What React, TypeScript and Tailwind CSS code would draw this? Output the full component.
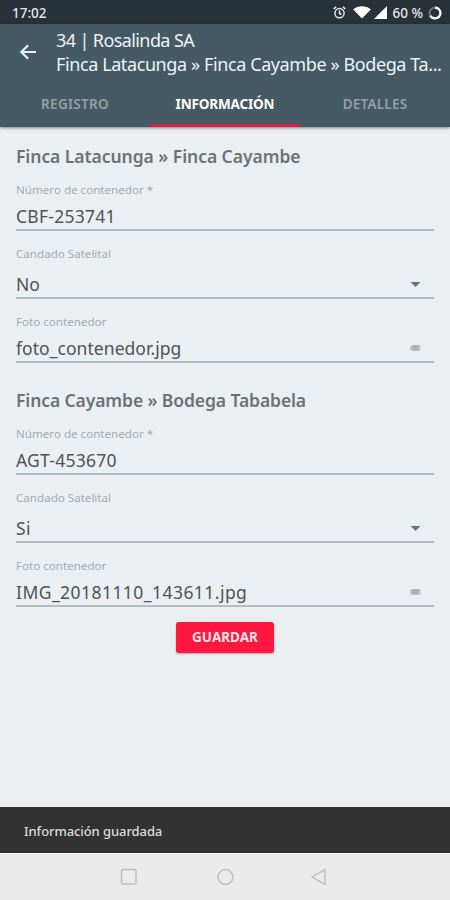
import clsx from "clsx";

type FieldKind = "text" | "select" | "file";

interface FieldData {
  label: string;
  value: string;
  kind: FieldKind;
  valueClass: string;
}

interface SectionData {
  title: string;
  titleClass: string;
  fields: FieldData[];
}

const sections: SectionData[] = [
  {
    title: "Finca Latacunga » Finca Cayambe",
    titleClass: "tracking-[-0.05px]",
    fields: [
      { label: "Número de contenedor *", value: "CBF-253741", kind: "text", valueClass: "tracking-[0.25px]" },
      { label: "Candado Satelital", value: "No", kind: "select", valueClass: "tracking-[0px]" },
      { label: "Foto contenedor", value: "foto_contenedor.jpg", kind: "file", valueClass: "tracking-[0.05px]" },
    ],
  },
  {
    title: "Finca Cayambe » Bodega Tababela",
    titleClass: "tracking-[-0.1px]",
    fields: [
      { label: "Número de contenedor *", value: "AGT-453670", kind: "text", valueClass: "tracking-[0.25px]" },
      { label: "Candado Satelital", value: "Si", kind: "select", valueClass: "tracking-[0.5px]" },
      { label: "Foto contenedor", value: "IMG_20181110_143611.jpg", kind: "file", valueClass: "tracking-[0.45px]" },
    ],
  },
];

const StatusBar = () => (
  <div className="flex h-6 shrink-0 items-center justify-between bg-[#283238] pr-2 pl-3 text-[#e4e8ea]">
    <span className="pt-0.5 text-[13.5px] leading-5 font-medium">17:02</span>
    <div className="flex items-center pt-px">
      <svg className="mr-[7px] h-[13px] w-[13px]" viewBox="0 0 13 13" fill="none" stroke="currentColor" strokeWidth="1.5">
        <circle cx="6.5" cy="7.2" r="4.6" />
        <path d="M6.5 4.600v2.900l2 1M.7 2.800 3.200.8M12.300 2.800 9.800.8" />
      </svg>
      <svg className="mr-[3px] h-[13px] w-[18px]" viewBox="0 0 18 13" fill="#fff">
        <path d="M9 12.600.2 3.400C2.600 1.300 5.600.3 9 .3s6.400 1 8.800 3.100z" />
      </svg>
      <svg className="mr-[6px] h-[13px] w-[13px]" viewBox="0 0 13 13" fill="#fff">
        <path d="M13 0v13H0z" />
      </svg>
      <span className="mr-[5px] text-[13.5px] leading-5 font-medium">60 %</span>
      <svg className="h-[14px] w-[14px]" viewBox="0 0 14 14" fill="none" strokeWidth="2.200">
        <circle cx="7" cy="7" r="5.400" stroke="#66727a" />
        <path d="M7 1.600a5.400 5.400 0 1 1-4.700 8.100" stroke="#fff" />
      </svg>
    </div>
  </div>
);

const Header = () => (
  <header className="z-10 flex h-[103px] shrink-0 flex-col bg-[#455a64] shadow-[0_1px_3px_rgba(0,0,0,0.45)]">
    <div className="flex h-[56px] text-[#eef2f4]">
      <svg className="mt-[20px] ml-5 h-4 w-4 shrink-0" viewBox="0 0 16 16" fill="none" stroke="currentColor" strokeWidth="2.200">
        <path d="M16 8H2M8.200 1.200 1.400 8l6.800 6.800" />
      </svg>
      <div className="mt-[4px] ml-5 min-w-0 text-[18px] leading-6 whitespace-nowrap">
        <p className="tracking-[-0.6px]">34 | Rosalinda SA</p>
        <p className="tracking-[-0.4px]">Finca Latacunga » Finca Cayambe » Bodega Ta...</p>
      </div>
    </div>
    <nav className="grid h-[47px] grid-cols-3 text-center text-[13.5px] leading-[48px] font-semibold text-[#93a2a9]">
      <span className="h-[47px] tracking-[0.3px]">REGISTRO</span>
      <span className="h-[47px] border-b-[3px] border-[#d81f45] font-bold tracking-[-0.15px] text-white">
        INFORMACIÓN
      </span>
      <span className="h-[47px] tracking-[0.2px]">DETALLES</span>
    </nav>
  </header>
);

const Field = ({ label, value, kind, valueClass }: FieldData) => (
  <div
    className={clsx(
      "flex flex-col border-b-2 border-[#b3c0c3]",
      kind === "select" ? "h-[53px]" : "h-[49px]"
    )}
  >
    <span className="text-[11.6px] leading-4 text-[#a3abb0]">{label}</span>
    <div className={clsx("flex h-6 items-center justify-between pr-[13px]", kind === "select" ? "mt-[10px]" : "mt-[6px]")}>
      <span className={clsx("text-[17.5px] leading-6 text-[#4d5357]", valueClass)}>{value}</span>
      {kind === "select" && (
        <svg className="h-[5px] w-[11px]" viewBox="0 0 11 5" fill="#61777c">
          <path d="M.5 0h10l-5 5z" />
        </svg>
      )}
      {kind === "file" && (
        <svg className="h-[6px] w-[11px]" viewBox="0 0 11 6" fill="none" stroke="#a1a8ac" strokeWidth="1.200">
          <path d="M10.500.8H3a2.200 2.200 0 0 0 0 4.400h5.200a1.500 1.500 0 0 0 0-3H3.600a.7.7 0 0 0 0 1.500h4.500" />
        </svg>
      )}
    </div>
  </div>
);

const Section = ({ title, titleClass, fields }: SectionData) => (
  <section className="flex flex-col">
    <h2 className={clsx("mb-[14px] text-[17.5px] leading-6 font-semibold text-[#6b7276]", titleClass)}>{title}</h2>
    <div className="flex flex-col gap-[15px]">
      {fields.map((field) => (
        <Field key={field.label} {...field} />
      ))}
    </div>
  </section>
);

const NavBar = () => (
  <div className="h-[47px] shrink-0 border-t border-white bg-[#ebebeb]">
    <svg className="h-[46px] w-[450px]" viewBox="0 0 450 46" fill="none" stroke="#bdbdbd" strokeWidth="1.400">
      <rect x="121.500" y="15.500" width="14.500" height="14.500" rx="1.500" />
      <circle cx="225.500" cy="23" r="7.500" />
      <path d="M325 15.700v14.600L312 23z" />
    </svg>
  </div>
);

export default function App() {
  return (
    <div className="flex h-[900px] w-[450px] flex-col overflow-hidden bg-[#ebeff2] font-['Noto_Sans',sans-serif]">
      <StatusBar />
      <Header />
      <main className="flex grow flex-col px-4 pt-[17px]">
        <div className="flex flex-col gap-[25px]">
          {sections.map((section) => (
            <Section key={section.title} {...section} />
          ))}
        </div>
        <button className="mt-[15px] h-[31px] w-[98px] self-center rounded-[3px] bg-[#ff173f] text-[13.5px] font-bold text-[#ffe3e8] shadow-[0_1px_2px_rgba(0,0,0,0.3)]">
          GUARDAR
        </button>
      </main>
      <div className="flex h-[46px] shrink-0 items-center bg-[#323232] pt-[3px] pl-6 text-[13px] font-medium tracking-[-0.08px] text-[#dcdcdc]">
        Información guardada
      </div>
      <NavBar />
    </div>
  );
}
